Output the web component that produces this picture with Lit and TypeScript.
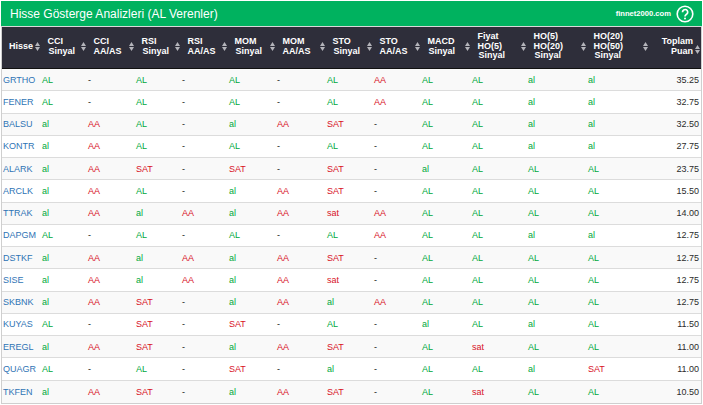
import { LitElement, html, css } from "lit";
import { customElement } from "lit/decorators.js";

const HEAD: string[][] = [
  ["Hisse"], ["CCI", "Sinyal"], ["CCI", "AA/AS"], ["RSI", "Sinyal"], ["RSI", "AA/AS"],
  ["MOM", "Sinyal"], ["MOM", "AA/AS"], ["STO", "Sinyal"], ["STO", "AA/AS"], ["MACD", "Sinyal"],
  ["Fiyat", "HO(5)", "Sinyal"], ["HO(5)", "HO(20)", "Sinyal"], ["HO(20)", "HO(50)", "Sinyal"], ["Toplam", "Puan"],
];

const ROWS = `GRTHO AL - AL - AL - AL AA AL AL al al 35.25
FENER AL - AL - AL - AL AA AL AL al al 32.75
BALSU al AA AL - al AA SAT - AL AL al al 32.50
KONTR al AA AL - AL - AL - AL AL al al 27.75
ALARK al AA SAT - SAT - SAT - al AL AL AL 23.75
ARCLK al AA AL - al AA SAT - AL AL AL AL 15.50
TTRAK al AA al AA al AA sat AA AL AL AL AL 14.00
DAPGM AL - AL - AL - AL AA AL AL al al 12.75
DSTKF al AA al AA al AA SAT - AL AL AL AL 12.75
SISE al AA al AA al AA sat - AL AL AL AL 12.75
SKBNK al AA SAT - al AA al AA AL AL AL AL 12.75
KUYAS AL - SAT - SAT - AL - al AL al AL 11.50
EREGL al AA SAT - al AA SAT - AL sat AL AL 11.00
QUAGR AL - AL - SAT - al - AL AL al SAT 11.00
TKFEN al AA SAT - al AA SAT - AL sat AL AL 10.50`
  .split("\n")
  .map((l) => l.split(" "));

const tone = (v: string) =>
  v === "-" ? "dash" : v === "AL" || v === "al" ? "buy" : "sell";

@customElement("app-root")
export class AppRoot extends LitElement {
  static styles = css`
    :host {
      display: block;
      width: 703px;
      height: 405px;
      overflow: hidden;
      background: #fff;
      font-family: "Liberation Sans", Arial, sans-serif;
    }
    .panel {
      margin: 1px 0 0 1px;
      width: 701px;
    }
    .title {
      box-sizing: border-box;
      height: 25px;
      background: #00b25f;
      color: #fff;
      display: flex;
      align-items: center;
      padding: 0 8px 0 9px;
    }
    .title h1 {
      margin: 0;
      font-size: 12px;
      font-weight: 400;
      flex: 1;
    }
    .brand {
      font-size: 7.6px;
      font-weight: 700;
      margin-right: 5px;
    }
    .help {
      display: block;
      width: 18px;
      height: 18px;
    }
    .frame {
      border: 1px solid #cfcfcf;
      border-top-color: #d9d9d9;
    }
    table {
      border-collapse: separate;
      border-spacing: 0;
      table-layout: fixed;
      width: 699px;
      font-size: 9px;
    }
    thead tr {
      background: #2e2e3a;
      color: #fff;
    }
    th {
      box-sizing: border-box;
      height: 42px;
      padding: 0 0 2px 5.5px;
      font-size: 9px;
      line-height: 9.5px;
      font-weight: 700;
      text-align: left;
      position: relative;
      white-space: nowrap;
      border-bottom: 1px solid #111;
    }
    th:first-child {
      padding-left: 7px;
    }
    th:last-child {
      text-align: right;
      padding-right: 8px;
    }
    .line {
      display: block;
    }
    .sinyal {
      padding-left: 1px;
    }
    .sort {
      position: absolute;
      right: 2px;
      top: 50%;
      margin-top: -5.5px;
      width: 5px;
      height: 9px;
    }
    th:last-child .sort {
      right: 1px;
      margin-top: -2.5px;
    }
    td {
      box-sizing: border-box;
      height: 22.25px;
      padding: 0 0 0.25px;
      border-bottom: 1px solid #dcdcdc;
      white-space: nowrap;
      color: #222;
    }
    tbody tr:nth-child(odd) {
      background: #f9f9f9;
    }
    tbody tr:last-child td {
      border-bottom: 0;
    }
    td.sym {
      color: #2f74b5;
      padding-left: 1px;
    }
    td.buy {
      color: #00a83c;
    }
    td.sell {
      color: #d8121f;
    }
    td.dash {
      color: #111;
    }
    td.num {
      text-align: right;
      padding-right: 2px;
      color: #2b2b2b;
    }
    .c0 { width: 40px; }
    .c1 { width: 46px; }
    .c2 { width: 48px; }
    .c3 { width: 46px; }
    .c4 { width: 47px; }
    .c5 { width: 48px; }
    .c6 { width: 50px; }
    .c7 { width: 47px; }
    .c8 { width: 48px; }
    .c9 { width: 50px; }
    .c10 { width: 56px; }
    .c11 { width: 60px; }
    .c12 { width: 62px; }
    .c13 { width: 51px; }
  `;

  render() {
    return html`
      <div class="panel">
        <div class="title">
          <h1>Hisse Gösterge Analizleri (AL Verenler)</h1>
          <span class="brand">finnet2000.com</span>
          <svg class="help" viewBox="0 0 18 18">
            <circle cx="9" cy="9" r="7.8" fill="none" stroke="#fff" stroke-width="1.6"></circle>
            <path d="M6.5 7.2a2.6 2.6 0 1 1 4 2.1c-1 .7-1.5 1.1-1.5 2.2" fill="none" stroke="#fff" stroke-width="1.7"></path>
            <circle cx="9" cy="13.6" r="1" fill="#fff"></circle>
          </svg>
        </div>
        <div class="frame">
          <table>
            <colgroup>${HEAD.map((_, i) => html`<col class="c${i}" />`)}</colgroup>
            <thead>
              <tr>
                ${HEAD.map(
                  (lines) => html`<th>
                    ${lines.map(
                      (l) => html`<span class="line ${l === "Sinyal" ? "sinyal" : ""}">${l}</span>`
                    )}
                    <svg class="sort" viewBox="0 0 5 9">
                      <path d="M2.5 0l2.5 4H0zM2.5 9L0 5h5z" fill="#b4b4ba"></path>
                    </svg>
                  </th>`
                )}
              </tr>
            </thead>
            <tbody>
              ${ROWS.map(
                (r) => html`<tr>
                  ${r.map((v, i) =>
                    i === 0
                      ? html`<td class="sym">${v}</td>`
                      : i === 13
                      ? html`<td class="num">${v}</td>`
                      : html`<td class=${tone(v)}>${v}</td>`
                  )}
                </tr>`
              )}
            </tbody>
          </table>
        </div>
      </div>
    `;
  }
}
